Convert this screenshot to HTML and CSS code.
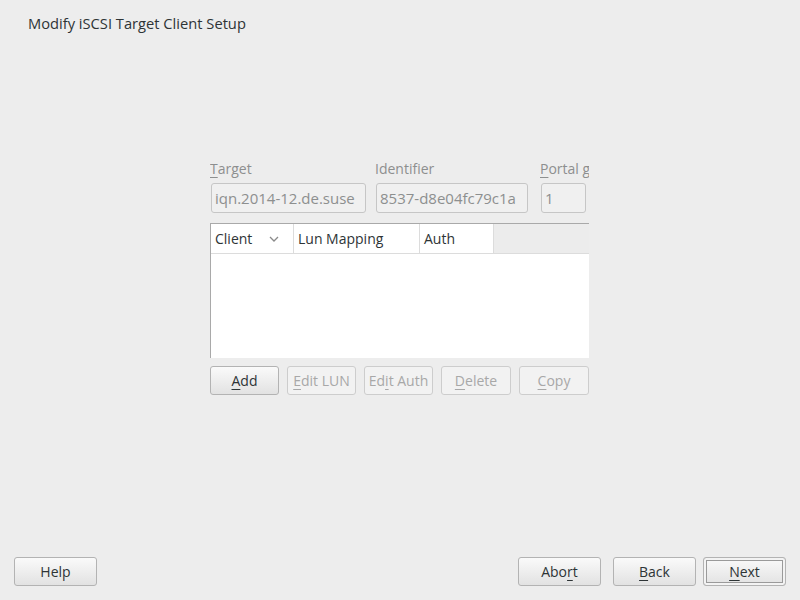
FILE: index.html
```html
<!DOCTYPE html>
<html>
<head>
<meta charset="utf-8">
<link rel="stylesheet" href="styles.css">
</head>
<body>
<div class="window">
  <h1 class="title">Modify iSCSI Target Client Setup</h1>
  <div class="content">
    <div class="panel">
      <div class="fields">
        <div class="field f-target">
          <label><u>T</u>arget</label>
          <div class="input">iqn.2014-12.de.suse</div>
        </div>
        <div class="field f-ident">
          <label>Identifier</label>
          <div class="input">8537-d8e04fc79c1a</div>
        </div>
        <div class="field f-portal">
          <label><u>P</u>ortal group</label>
          <div class="input">1</div>
        </div>
      </div>
      <div class="table">
        <div class="thead">
          <div class="th c1">Client<svg class="chev" width="10" height="6" viewBox="0 0 10 6"><path d="M1 1 L5 5 L9 1" fill="none" stroke="#8a8a8a" stroke-width="1.3"/></svg></div>
          <div class="th c2">Lun Mapping</div>
          <div class="th c3">Auth</div>
          <div class="th-fill"></div>
        </div>
        <div class="tbody"></div>
      </div>
      <div class="actions">
        <button class="btn"><u>A</u>dd</button>
        <button class="btn disabled"><u>E</u>dit LUN</button>
        <button class="btn disabled">Ed<u>i</u>t Auth</button>
        <button class="btn disabled wide"><u>D</u>elete</button>
        <button class="btn disabled wide"><u>C</u>opy</button>
      </div>
    </div>
  </div>
  <div class="footer">
    <button class="btn big">Help</button>
    <div class="spacer"></div>
    <button class="btn big">Abo<u>r</u>t</button>
    <button class="btn big"><u>B</u>ack</button>
    <button class="btn big focus"><u>N</u>ext</button>
  </div>
</div>
</body>
</html>
```
FILE: styles.css
```css
html, body {
  margin: 0;
  padding: 0;
  background: #ededed;
}
body {
  font-family: "Open Sans", "Noto Sans", sans-serif;
  font-size: 14px;
  color: #2e3436;
}
.window {
  width: 800px;
  height: 600px;
  display: flex;
  flex-direction: column;
}
.title {
  margin: 0;
  padding: 13px 0 0 28px;
  font-size: 14.7px;
  font-weight: normal;
  line-height: 20px;
  height: 20px;
}
.content {
  flex: 1;
  padding: 125px 0 0 210px;
}
.panel {
  width: 379px;
  overflow: hidden;
}
.fields {
  display: flex;
  white-space: nowrap;
}
.field {
  display: flex;
  flex-direction: column;
  flex: none;
}
.field label {
  color: #8d8f8f;
  font-size: 14px;
  line-height: 18px;
  height: 18px;
  padding-top: 2px;
}
.field u { text-decoration-thickness: 1px; text-underline-offset: 3px; }
.f-target { width: 165px; }
.f-ident { width: 165px; }
.f-portal { width: 80px; }
.input {
  margin-top: 5px;
  margin-left: 1px;
  height: 30px;
  box-sizing: border-box;
  border: 1px solid #c6c6c6;
  border-radius: 3px;
  background: #f0f0f0;
  color: #8d8f8f;
  padding: 0 3px;
  font-size: 15px;
  line-height: 28px;
  overflow: hidden;
  white-space: nowrap;
}
.f-target .input { width: 155px; }
.f-ident .input { width: 152px; }
.f-portal .input { width: 45px; }
.table {
  margin-top: 10px;
  height: 135px;
  box-sizing: border-box;
  border-top: 1px solid #a9a9a9;
  border-left: 1px solid #a9a9a9;
  background: #fff;
  display: flex;
  flex-direction: column;
}
.thead {
  display: flex;
  height: 30px;
  box-sizing: border-box;
  border-bottom: 1px solid #dcdcdc;
}
.th {
  box-sizing: border-box;
  padding-left: 4px;
  line-height: 28px;
  color: #2e3436;
  border-right: 1px solid #dcdcdc;
  background: #fff;
  display: flex;
  align-items: center;
}
.c1 { width: 83px; }
.c2 { width: 126px; }
.c3 { width: 74px; }
.chev { margin-left: 17px; }
.th-fill { flex: 1; background: #ececec; }
.tbody { flex: 1; }
.actions {
  display: flex;
  gap: 8px;
  margin-top: 8px;
}
.btn {
  font-family: "Open Sans", "Noto Sans", sans-serif;
  font-size: 14px;
  height: 29px;
  width: 69px;
  box-sizing: border-box;
  border: 1px solid #b3b3b3;
  border-radius: 3px;
  background: linear-gradient(#fafafa, #e2e2e2);
  color: #2e3436;
  padding: 0;
  white-space: nowrap;
}
.btn u { text-decoration-thickness: 1px; text-underline-offset: 3px; }
.btn.disabled {
  color: #a8a8a8;
  background: #f2f2f2;
  border-color: #cdcdcd;
}
.btn.wide { width: 70px; }
.footer {
  display: flex;
  padding: 0 14px 14px 14px;
  gap: 12px;
}
.footer .btn { width: 83px; height: 29px; }
.spacer { flex: 1; }
.footer .btn.focus {
  margin-left: -5px;
  box-shadow: inset 0 0 0 2px #f3f3f3, inset 0 0 0 3px #9a9a9a;
}
```
